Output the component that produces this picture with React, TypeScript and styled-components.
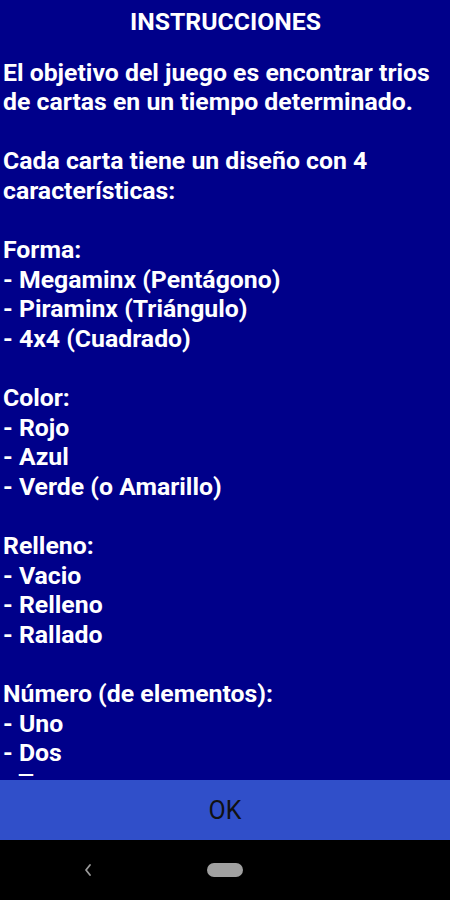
import styled, { createGlobalStyle } from "styled-components";

const GlobalStyle = createGlobalStyle`
  html, body {
    margin: 0;
    padding: 0;
    background: #000000;
  }
  * {
    box-sizing: border-box;
  }
`;

const sections: { title: string; items: string[] }[] = [
  {
    title: "Forma:",
    items: ["Megaminx (Pentágono)", "Piraminx (Triángulo)", "4x4 (Cuadrado)"],
  },
  { title: "Color:", items: ["Rojo", "Azul", "Verde (o Amarillo)"] },
  { title: "Relleno:", items: ["Vacio", "Relleno", "Rallado"] },
  { title: "Número (de elementos):", items: ["Uno", "Dos", "Tres"] },
];

export default function App() {
  return (
    <>
      <GlobalStyle />
      <Screen>
        <Scroll>
          <Title>INSTRUCCIONES</Title>
          <Paragraph>
            El objetivo del juego es encontrar trios de cartas en un tiempo
            determinado.
          </Paragraph>
          <Paragraph>
            Cada carta tiene un diseño con 4 características:
          </Paragraph>
          {sections.map((s) => (
            <Paragraph key={s.title}>
              {s.title}
              {s.items.map((item) => (
                <Line key={item}>- {item}</Line>
              ))}
            </Paragraph>
          ))}
        </Scroll>
        <OkButton>OK</OkButton>
        <NavBar>
          <svg width="10" height="14" viewBox="0 0 10 14">
            <polyline
              points="7,2 3,7 7,12"
              fill="none"
              stroke="#9a9a9a"
              strokeWidth="1.8"
              strokeLinecap="round"
              strokeLinejoin="round"
            />
          </svg>
          <HomePill />
          <span />
        </NavBar>
      </Screen>
    </>
  );
}

const Screen = styled.div`
  width: 450px;
  height: 900px;
  display: flex;
  flex-direction: column;
  background: #00008a;
  font-family: Roboto, "Liberation Sans", sans-serif;
`;

const Scroll = styled.div`
  flex: 1;
  overflow: hidden;
  margin-bottom: 4px;
  padding: 7px 2px 0 3px;
  color: #ffffff;
  font-size: 24.8px;
  font-weight: 700;
  line-height: 29.6px;
`;

const Title = styled.div`
  text-align: center;
  margin-bottom: 21px;
`;

const Paragraph = styled.div`
  margin-bottom: 29.6px;
`;

const Line = styled.div``;

const OkButton = styled.button`
  height: 60px;
  flex-shrink: 0;
  border: none;
  background: #304fc9;
  color: #111111;
  font-family: Roboto, "Liberation Sans", sans-serif;
  font-size: 25px;
  font-weight: 400;
  padding: 0;
  cursor: pointer;
`;

const NavBar = styled.div`
  height: 60px;
  flex-shrink: 0;
  background: #000000;
  display: grid;
  grid-template-columns: 175px 100px 175px;
  align-items: center;
  justify-items: center;
`;

const HomePill = styled.div`
  width: 36px;
  height: 14px;
  border-radius: 7px;
  background: #a0a0a0;
`;
